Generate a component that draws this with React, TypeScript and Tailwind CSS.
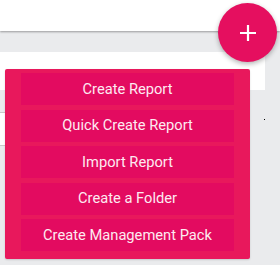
import React from 'react';

const actions = [
  'Create Report',
  'Quick Create Report',
  'Import Report',
  'Create a Folder',
  'Create Management Pack',
];

export default function App() {
  return (
    <div
      className="relative w-[280px] h-[265px] overflow-hidden bg-[#eaebed]"
      style={{ fontFamily: 'Roboto, "Liberation Sans", sans-serif' }}
    >
      {/* Page header */}
      <div className="h-[31px] bg-white shadow-[0_1px_2px_rgba(0,0,0,0.35)]" />

      {/* Page body */}
      <div className="pt-[21px] flex flex-col">
        <div className="w-[265px] h-[38px] bg-white" />
        <div className="mt-[22px] w-[200px] h-[34px] bg-white border-y border-[#c9c9c9]" />
      </div>

      <span className="absolute left-[264px] top-[119px] w-px h-px bg-black" />

      {/* Floating action button */}
      <button className="absolute left-[218px] top-[3px] w-[59px] h-[59px] rounded-full bg-[#e50f5f] shadow-[0_2px_5px_rgba(0,0,0,0.3)] flex items-center justify-center">
        <svg width="18" height="18" viewBox="0 0 18 18">
          <path d="M9 1v16M1 9h16" stroke="white" strokeWidth="2.2" />
        </svg>
      </button>

      {/* Action menu */}
      <div className="absolute left-[5px] top-[69px] w-[245px] h-[190px] rounded-[2px] bg-[#e8185c] px-4 py-1 flex flex-col gap-[4.5px] shadow-[0_1px_2px_rgba(0,0,0,0.15)]">
        {actions.map((label) => (
          <div
            key={label}
            className="h-[32px] shrink-0 bg-[#e30b60] flex items-center justify-center text-[14.7px] text-[#fdeaf1]"
          >
            {label}
          </div>
        ))}
      </div>
    </div>
  );
}
